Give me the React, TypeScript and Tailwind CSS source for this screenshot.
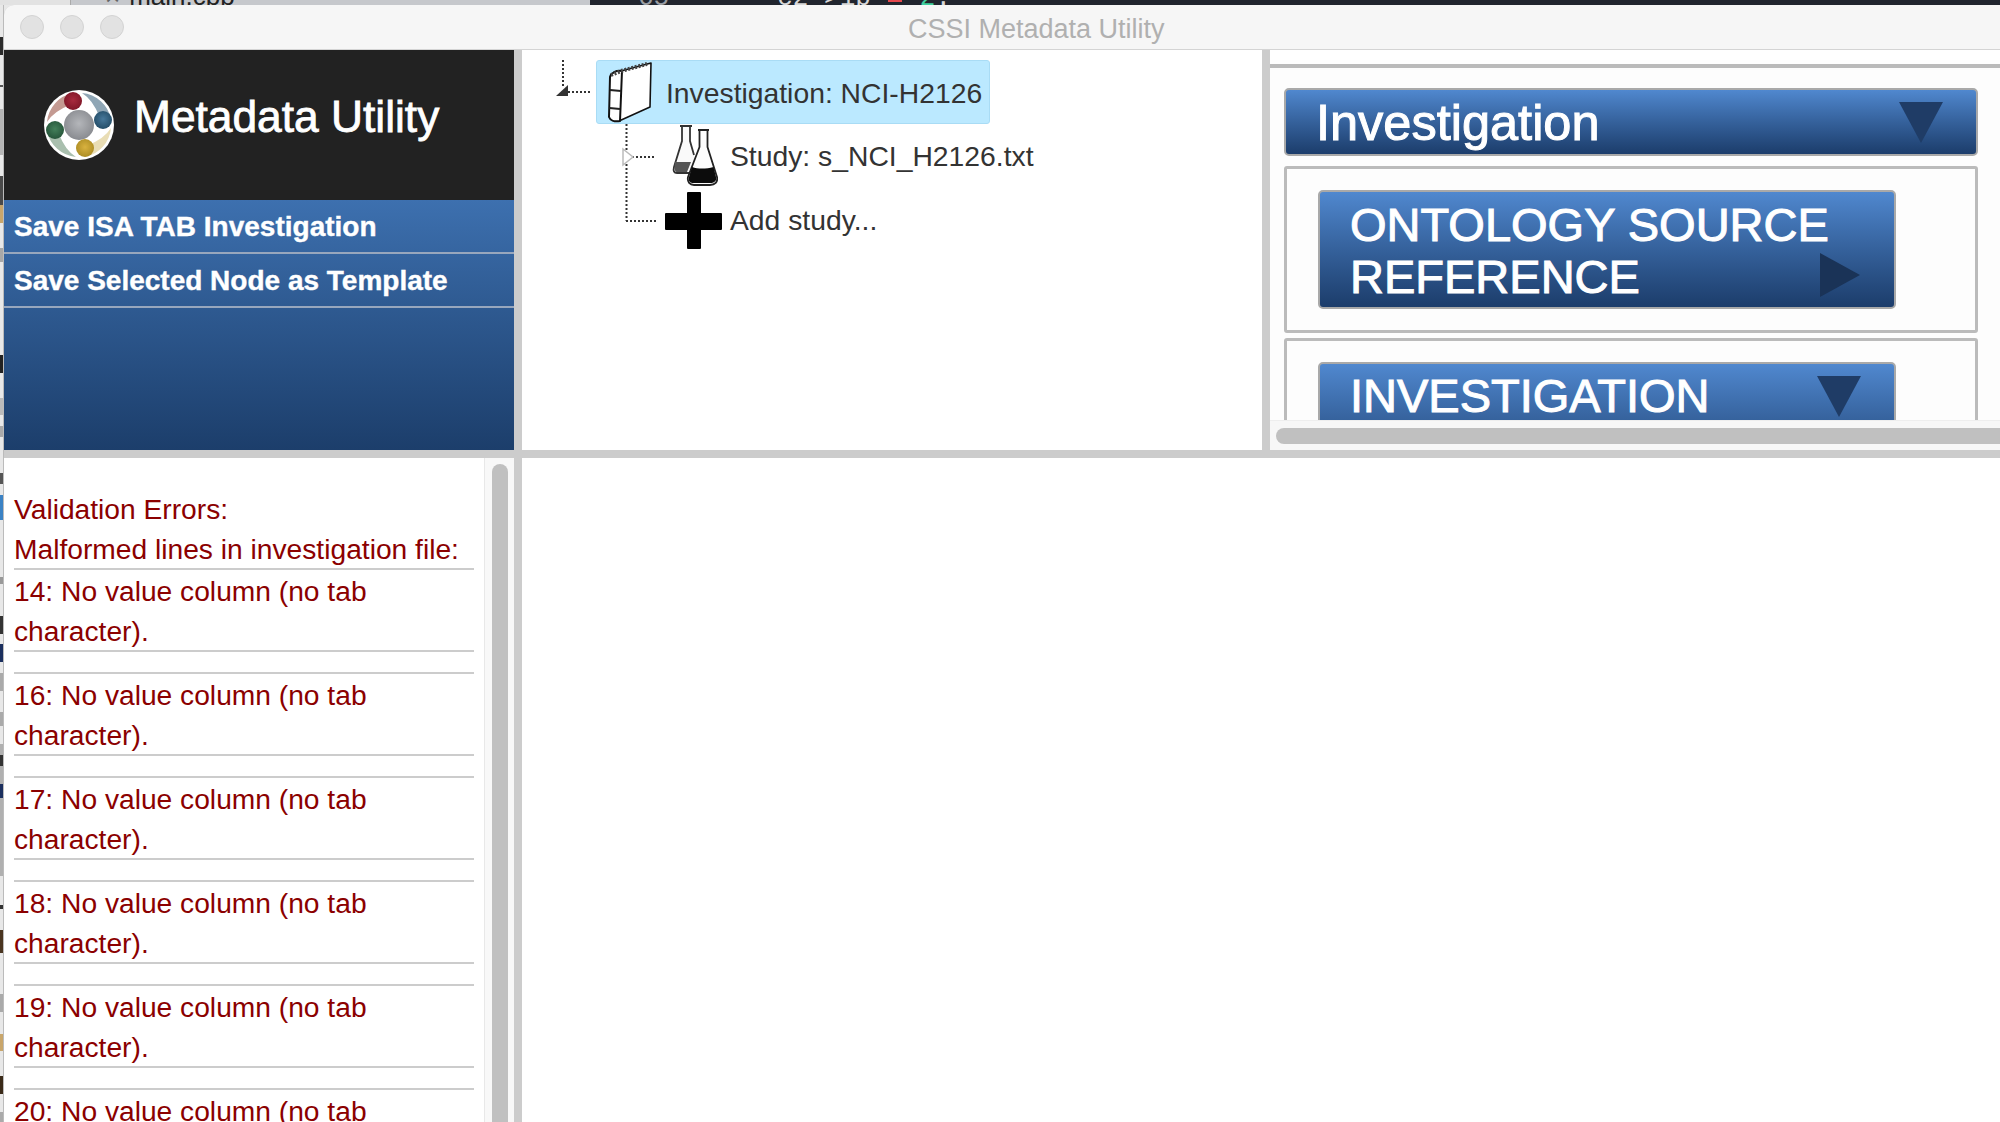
const errorLines = [14, 16, 17, 18, 19, 20];

// scraps of the windows behind, seen down the left edge
const behind = [
  "h-[32px]", "h-[18px] bg-[#2b2b2b]", "h-[30px]", "h-[2px] bg-[#555]", "h-[22px]", "h-[46px] bg-[#b5b5b5]",
  "h-[21px]", "h-[29px] bg-[#4a4a4a]", "h-[18px] bg-[#c9a66b]", "h-[25px]", "h-[14px] bg-[#a8a8a8]", "h-[93px]",
  "h-[18px] bg-[#222]", "h-[25px]", "h-[17px] bg-[#bbb]", "h-[11px]", "h-[11px] bg-[#aaa]", "h-[36px]",
  "h-[11px] bg-[#555]", "h-[11px]", "h-[25px] bg-[#3b82c4]", "h-[57px]", "h-[7px] bg-[#999]", "h-[32px]",
  "h-[18px] bg-[#333]", "h-[10px]", "h-[18px] bg-[#1b2f5e]", "h-[11px]", "h-[18px] bg-[#aaa]", "h-[21px]",
  "h-[14px] bg-[#aaa]", "h-[18px]", "h-[11px] bg-[#b0b0b0]", "h-[11px] bg-[#333]", "h-[18px] bg-[#b0b0b0]",
  "h-[14px] bg-[#1b2f5e]", "h-[78px] bg-[#b0b0b0]", "h-[29px]", "h-[4px] bg-[#333]", "h-[21px]",
  "h-[23px] bg-[#4a3520]", "h-[41px]", "h-[18px] bg-[#aaa]", "h-[22px]", "h-[17px] bg-[#c9a66b]", "h-[25px]",
  "h-[18px] bg-[#3a2a18]", "h-[18px]", "h-[16px] bg-[#aaa]",
];

function Logo() {
  const swooshes = [
    { rotate: 0, fill: "#c49a92" },
    { rotate: 90, fill: "#8fa6b5" },
    { rotate: 180, fill: "#e9ddb4" },
    { rotate: 270, fill: "#a9bfae" },
  ];
  const balls = [
    { cx: 30, cy: 12, id: "ballRed" },
    { cx: 60, cy: 31, id: "ballBlue" },
    { cx: 42, cy: 59, id: "ballYellow" },
    { cx: 12, cy: 41, id: "ballGreen" },
  ];
  return (
    <svg width="72" height="72" viewBox="0 0 72 72" className="shrink-0">
      <defs>
        <radialGradient id="ballRed" cx="50%" cy="45%" r="60%">
          <stop offset="0%" stopColor="#a82a3e" />
          <stop offset="100%" stopColor="#7c1526" />
        </radialGradient>
        <radialGradient id="ballBlue" cx="50%" cy="45%" r="60%">
          <stop offset="0%" stopColor="#47789a" />
          <stop offset="100%" stopColor="#214a64" />
        </radialGradient>
        <radialGradient id="ballYellow" cx="50%" cy="45%" r="60%">
          <stop offset="0%" stopColor="#d9b23f" />
          <stop offset="100%" stopColor="#a98a22" />
        </radialGradient>
        <radialGradient id="ballGreen" cx="50%" cy="45%" r="60%">
          <stop offset="0%" stopColor="#43805a" />
          <stop offset="100%" stopColor="#245238" />
        </radialGradient>
        <radialGradient id="ballGrey" cx="50%" cy="45%" r="60%">
          <stop offset="0%" stopColor="#b4b6ba" />
          <stop offset="100%" stopColor="#85878c" />
        </radialGradient>
      </defs>
      <circle cx="36" cy="36" r="35" fill="#fff" />
      {swooshes.map((s) => (
        <path
          key={s.rotate}
          d="M30 4 A32.500 32.500 0 0 0 4 33 Q11 22 27 16 Z"
          fill={s.fill}
          transform={`rotate(${s.rotate} 36 36)`}
        />
      ))}
      <circle cx="36" cy="36" r="15" fill="url(#ballGrey)" />
      {balls.map((b) => (
        <circle key={b.id} cx={b.cx} cy={b.cy} r="9" fill={`url(#${b.id})`} />
      ))}
    </svg>
  );
}

function BookIcon() {
  return (
    <svg width="45" height="62" viewBox="0 0 45 62" className="shrink-0">
      <path d="M13 10 L43 2 L42 46 L11 60 Z" fill="#fff" stroke="#111" strokeWidth="1.6" strokeLinejoin="round" />
      <path d="M2 16 C3 12 8 9 14 10 L12 60 C6 61 2 59 1 56 Z" fill="#fff" stroke="#111" strokeWidth="2" strokeLinejoin="round" />
      <path d="M3 14 L13 10 L39 3" fill="none" stroke="#444" strokeWidth="4" strokeDasharray="2 1.6" />
      <path d="M2 29 L13 30 M1.500 47 L12 48" stroke="#222" strokeWidth="2" fill="none" />
    </svg>
  );
}

function FlaskIcon() {
  return (
    <svg width="46" height="62" viewBox="0 0 46 62" className="shrink-0">
      <path d="M10 2 H18 V16 L24 38 L16 48 H5 C2 48 1 46 2 42 L10 16 Z" fill="#fafafa" />
      <path d="M10 1 V16 L2 42 C1 46 2 48 5 48 H17 M18 1 V16 L22 30 M8 1 H20" fill="none" stroke="#333" strokeWidth="1.800" />
      <path d="M3 37 H19 L15 47 H5 C3 47 2 45 3 37 Z" fill="#555" />
      <path d="M26 5 H37 M27.500 5 V22 L16 52 C15 57 18 60 22 60 H38 C43 60 46 57 45 52 L35.500 22 V5" fill="#fdfdfd" stroke="#222" strokeWidth="1.800" strokeLinejoin="round" />
      <path d="M20 42 C26 44 34 44 41.500 42 L44 52 C45 56 42 58 38 58 H22 C18 58 16 56 17 52 Z" fill="#0c0c0c" />
    </svg>
  );
}

function PlusIcon() {
  return (
    <svg width="57" height="57" viewBox="0 0 57 57" className="shrink-0">
      <path d="M22 1 Q22 0 23 0 H35 Q36 0 36 1 V21 H56 Q57 21 57 22 V37 Q57 38 56 38 H36 V56 Q36 57 35 57 H23 Q22 57 22 56 V38 H1 Q0 38 0 37 V22 Q0 21 1 21 H22 Z" fill="#000" />
    </svg>
  );
}

function TreeLines() {
  return (
    <svg width="140" height="200" viewBox="0 0 140 200" className="absolute left-[30px] top-0" fill="none">
      <g stroke="#333" strokeWidth="2" strokeDasharray="2 2">
        <path d="M11 10 V36" />
        <path d="M16 42 H40" />
        <path d="M74.500 74 V171" />
        <path d="M80 107 H104" />
        <path d="M74 171 H104" />
      </g>
      <path d="M4 46 L16 35 V46 Z" fill="#333" />
      <path d="M71 99 L81 107 L71 115 Z" fill="#fff" stroke="#bbb" strokeWidth="1.500" />
    </svg>
  );
}

function Tri({ dir, className }: { dir: "down" | "right"; className?: string }) {
  if (dir === "right") {
    return (
      <svg width="40" height="44" viewBox="0 0 40 44" className={className}>
        <path d="M0 0 L40 22 L0 44 Z" fill="#1a3357" />
      </svg>
    );
  }
  return (
    <svg width="44" height="41" viewBox="0 0 44 41" className={className}>
      <path d="M0 0 H44 L22 41 Z" fill="#1f3c66" />
    </svg>
  );
}

export default function App() {
  return (
    <div className="flex h-[1122px] w-[2000px] flex-col overflow-hidden bg-[#e8e8e8] font-['Liberation_Sans',Arial,sans-serif]">
      {/* windows behind, only a few pixels show */}
      <div className="flex h-[5px] shrink-0 overflow-hidden text-[26px] leading-none">
        <div className="w-[71px] border-r border-[#aaa] bg-[#e2e2e2]" />
        <div className="flex w-[519px] bg-[#c6c8cc] pl-[34px] text-[#222]">
          <span className="-mt-[17px] text-[#666]">×</span>
          <span className="-mt-[17px] ml-[9px]">main.cbb</span>
        </div>
        <div className="flex flex-1 bg-[#21252e] font-['Liberation_Mono',monospace] text-[#9a9da3]">
          <span className="-mt-[15px] ml-[48px]">65</span>
          <span className="-mt-[15px] ml-[108px] text-[#d8d8d8]">c2 &gt;1b</span>
          <span className="ml-[17px] h-[2px] w-[14px] bg-[#e5484d]" />
          <span className="-mt-[15px] ml-[18px] text-[#3fcf9e]">2</span>
          <span className="-mt-[15px] text-[#d8d8d8]">.</span>
        </div>
      </div>

      <div className="flex min-h-0 flex-1">
        <div className="w-[4px] shrink-0 border-r border-[#bbb]">
          <div className="flex flex-col">
            {behind.map((c, i) => (
              <div key={i} className={c} />
            ))}
          </div>
        </div>

        <div className="flex min-w-0 flex-1 flex-col overflow-hidden rounded-tl-[10px] bg-[#cccccc]">
          {/* title bar */}
          <div className="relative flex h-[45px] shrink-0 items-center border-b border-[#d4d4d4] bg-[#f6f6f6] pl-[16px]">
            <div className="flex gap-[16px]">
              <div className="h-[24px] w-[24px] rounded-full border border-[#d2d2d2] bg-[#e2e2e2]" />
              <div className="h-[24px] w-[24px] rounded-full border border-[#d2d2d2] bg-[#e2e2e2]" />
              <div className="h-[24px] w-[24px] rounded-full border border-[#d2d2d2] bg-[#e2e2e2]" />
            </div>
            <div className="absolute left-[904px] top-[4px] text-[27px] leading-[40px] text-[#b0b0b0]">CSSI Metadata Utility</div>
          </div>

          {/* top row */}
          <div className="flex h-[400px] shrink-0 gap-[8px]">
            <div className="flex w-[510px] shrink-0 flex-col">
              <div className="flex h-[150px] items-center gap-[19px] bg-[#222222] pl-[39px]">
                <Logo />
                <span className="mb-[16px] text-[44.3px] leading-[52px] text-white [-webkit-text-stroke:0.8px_white]">Metadata Utility</span>
              </div>
              <div className="flex-1 bg-gradient-to-b from-[#3d70af] to-[#1c3e6b]">
                <div className="h-[54px] border-b-2 border-[#98a7bd] pl-[10px] pt-[1px] text-[28px] font-bold leading-[52px] text-white [-webkit-text-stroke:0.4px_white]">
                  Save ISA TAB Investigation
                </div>
                <div className="h-[54px] border-b-2 border-[#98a7bd] pl-[10px] pt-[1px] text-[28px] font-bold leading-[52px] text-white [-webkit-text-stroke:0.4px_white]">
                  Save Selected Node as Template
                </div>
              </div>
            </div>

            {/* tree */}
            <div className="relative w-[740px] shrink-0 bg-white pt-[10px] text-[28.3px] text-[#333]">
              <TreeLines />
              <div className="ml-[74px] flex h-[64px] w-[394px] items-center rounded-[3px] border border-[#a9dcf5] bg-[#bbe9ff] pl-[11px]">
                <BookIcon />
                <span className="ml-[13px] mt-[2px]">Investigation: NCI-H2126</span>
              </div>
              <div className="ml-[150px] flex h-[64px] items-center">
                <FlaskIcon />
                <span className="ml-[12px] mt-[1px]">Study: s_NCI_H2126.txt</span>
              </div>
              <div className="ml-[143px] flex h-[64px] items-center">
                <PlusIcon />
                <span className="ml-[8px] mt-[1px]">Add study...</span>
              </div>
            </div>

            {/* right pane */}
            <div className="flex min-w-0 flex-1 flex-col bg-white">
              <div className="h-[18px] shrink-0 border-b-4 border-[#bbbbbb]" />
              <div className="h-[352px] shrink-0 overflow-hidden bg-[#fdfdfd] pl-[14px] pt-[20px]">
                <div className="flex h-[68px] w-[694px] items-center justify-between rounded-[5px] border-2 border-[#a9a9a9] bg-gradient-to-b from-[#5088cf] to-[#1c3d6b] pl-[30px] pr-[33px]">
                  <span className="mt-[2px] text-[50.5px] leading-none text-white [-webkit-text-stroke:1px_white]">Investigation</span>
                  <Tri dir="down" />
                </div>
                <div className="mt-[10px] h-[167px] w-[694px] rounded-[3px] border-[3px] border-[#bbbbbb] pl-[31px] pt-[21px]">
                  <div className="relative h-[119px] w-[578px] rounded-[5px] border-2 border-[#a9a9a9] bg-gradient-to-b from-[#5088cf] to-[#1c3d6b] pl-[30px] pt-[7px]">
                    <div className="w-[500px] text-[47px] leading-[52px] text-white [-webkit-text-stroke:1px_white]">ONTOLOGY SOURCE REFERENCE</div>
                    <Tri dir="right" className="absolute bottom-[10px] right-[34px]" />
                  </div>
                </div>
                <div className="mt-[5px] h-[167px] w-[694px] rounded-[3px] border-[3px] border-[#bbbbbb] pl-[31px] pt-[21px]">
                  <div className="flex h-[119px] w-[578px] items-start justify-between rounded-[5px] border-2 border-[#a9a9a9] bg-gradient-to-b from-[#5088cf] to-[#1c3d6b] pl-[30px] pr-[33px] pt-[6px]">
                    <span className="text-[47px] leading-[52px] text-white [-webkit-text-stroke:1px_white]">INVESTIGATION</span>
                    <Tri dir="down" className="mt-[6px]" />
                  </div>
                </div>
              </div>
              <div className="flex h-[30px] shrink-0 items-center border-t border-[#eeeeee] bg-[#f7f7f7] pl-[6px]">
                <div className="h-[16px] flex-1 rounded-l-full bg-[#c0c0c0]" />
              </div>
            </div>
          </div>

          {/* bottom row */}
          <div className="mt-[8px] flex min-h-0 flex-1 gap-[8px]">
            <div className="flex w-[510px] shrink-0 overflow-hidden bg-white">
              <div className="w-[480px] shrink-0 pl-[10px] pt-[31px] text-[28.2px] leading-[40px] text-[#8b0000]">
                <div className="w-[460px]">
                  <div>Validation Errors:</div>
                  <div className="-mb-[1px]">Malformed lines in investigation file:</div>
                  {errorLines.map((n) => (
                    <div key={n} className="mb-[20px] h-[84px] border-y-2 border-[#cccccc] pt-[1px]">
                      {n}: No value column (no tab character).
                    </div>
                  ))}
                </div>
              </div>
              <div className="flex w-[30px] shrink-0 justify-center border-l border-[#e8e8e8] bg-[#f8f8f8] pt-[6px]">
                <div className="h-[700px] w-[16px] rounded-t-full bg-[#c0c0c0]" />
              </div>
            </div>
            <div className="flex-1 bg-white" />
          </div>
        </div>
      </div>
    </div>
  );
}
